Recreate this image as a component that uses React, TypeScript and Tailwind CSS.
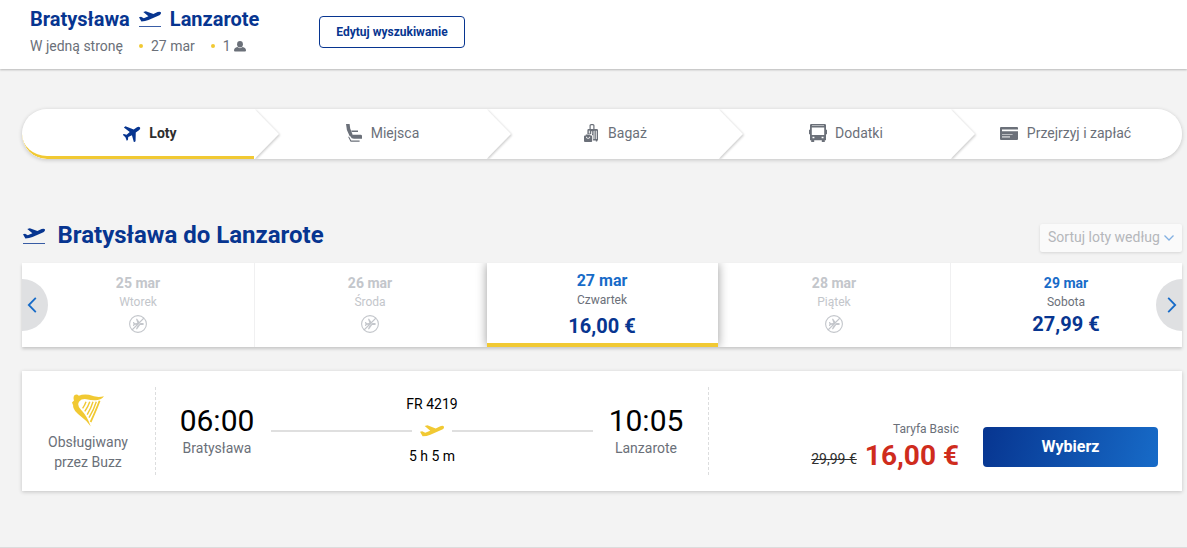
import type { ReactNode } from 'react';

type IconProps = { className?: string };

const TAKEOFF = 'M22 1.6Q22.2 3.2 20.4 4.2L9.5 8.9Q6.2 10.3 2.4 10.4L0 6.3L2 5.7L4.8 7.2L9.4 5.3L4.3 1L6.8 .2L14.4 3.1L18.6 1.1Q21.2 .1 22 1.6Z';
const JET =
  'M9.5 0Q9.2 1.7 7 1.8L3 1.9L-2.2 9.2L-4.2 9.2L-1.8 2L-6 1.5L-7.9 3.7L-9.4 3.7L-8.5 0L-9.4 -3.7L-7.9 -3.7L-6 -1.5L-1.8 -2L-4.2 -9.2L-2.2 -9.2L3 -1.9L7 -1.8Q9.2 -1.7 9.5 0Z';

function TakeoffIcon({ className }: IconProps) {
  return (
    <svg className={className} width="22" height="18" viewBox="0 0 22 18" fill="currentColor">
      <path d={TAKEOFF} />
      <path d="M0 15h22v1H0z" opacity=".8" />
    </svg>
  );
}

function JetIcon() {
  return (
    <svg width="18" height="18" viewBox="0 0 18 18" fill="currentColor" className="text-[#073590]">
      <path d={JET} transform="translate(9.3 8.6) rotate(-34) scale(.98)" />
    </svg>
  );
}

function SeatIcon() {
  return (
    <svg width="17" height="18" viewBox="0 0 17 18" fill="currentColor">
      <path d="M0 0H3.6L4.2 4.5L6.6 10.6L5.8 13L3.6 12L.9 6Z" />
      <path d="M5.2 6.4H12V8H5.7Z" />
      <path d="M6.6 10.8H14.6Q16 10.8 16 12V14.8H8Q5.2 14.8 4.6 12.6Z" />
      <path d="M3 12.5L5.2 16.6H13.6V17.8H4.6L2.2 13Z" />
    </svg>
  );
}

function LuggageIcon() {
  return (
    <svg width="14" height="18" viewBox="0 0 14 18" fill="currentColor">
      <rect x="6.1" y=".6" width="3.8" height="6" rx="1" fill="none" stroke="currentColor" strokeWidth="1.2" />
      <path
        fillRule="evenodd"
        d="M4.6 5H12.8Q14 5 14 6.2V16.4H13.2V17.6H11.8V16.4H9.1V11.2H8V10H3.4V6.2Q3.4 5 4.6 5ZM4.8 6.6V9.6H5.8V6.6ZM7.2 6.6V10H8.2V6.6ZM9.6 6.8V15H10.5V6.8ZM11.8 6.8V15H12.7V6.8Z"
      />
      <path fillRule="evenodd" d="M1.8 11.4V10.4H6.4V11.4H7.2Q8.2 11.4 8.2 12.4V17Q8.2 18 7.2 18H1Q0 18 0 17V12.4Q0 11.4 1 11.4ZM2.1 12.7V13.7Q4.1 15.6 6.1 13.7V12.7H5.3V13.5Q4.1 14.3 2.9 13.5V12.7Z" />
    </svg>
  );
}

function BusIcon() {
  return (
    <svg width="18" height="18" viewBox="0 0 18 18" fill="currentColor">
      <path
        fillRule="evenodd"
        d="M2.3 0H15.7Q17 0 17 1.3V5.7H18V10.2H17V16.2H15.8V18H12.8V16.2H5.2V18H2.2V16.2H1V10.2H0V5.7H1V1.3Q1 0 2.3 0ZM3 1.4V2H15V1.4ZM2.8 3.6V11H15.2V3.6ZM3.5 12.8V14.3H5.4V12.8ZM12.6 12.8V14.3H14.5V12.8Z"
      />
    </svg>
  );
}

function CardIcon() {
  return (
    <svg width="18" height="13" viewBox="0 0 18 13" fill="currentColor">
      <path fillRule="evenodd" d="M1 0H17Q18 0 18 1V12Q18 13 17 13H1Q0 13 0 12V1Q0 0 1 0ZM2 2.5V4.2H18V2.5Z" />
      <path d="M2 7.1H12.6V8H2ZM2 9.1H10V10.8H2Z" fill="#fff" opacity=".55" />
    </svg>
  );
}

function NoFlightIcon() {
  return (
    <svg width="18" height="18" viewBox="0 0 18 18" className="text-[#c3c6cb]">
      <circle cx="9" cy="9" r="8.4" fill="none" stroke="currentColor" strokeWidth="1.1" />
      <path d={JET} fill="currentColor" transform="translate(9.4 9) scale(.58 .56)" />
      <path d="M4 15.2L15.6 3.6" stroke="#fff" strokeWidth=".6" />
      <path d="M3 15L15 3" stroke="currentColor" strokeWidth="1.1" />
    </svg>
  );
}

function HarpLogo() {
  return (
    <svg width="32" height="33" viewBox="0 0 32 33" fill="#f1c933">
      <path d="M2.4 1.2Q5-.3 6.8 1.8Q11 -.2 17 .8Q25 4.2 32 2.2Q29.8 5.6 24 6.2Q19 6.4 14.5 5.2Q9.5 4.6 7.2 7.4Q4.6 11 8.8 15.6Q15 21.8 18.8 32.6Q14.8 26.4 9 22.4Q.2 16 1.2 11.4L0 8.6L2 6.4Q.9 3.2 2.4 1.2Z" />
      <g fill="none" stroke="#f1c933" strokeWidth="1.4">
        <path d="M14 7.8Q13 11 10.6 14.4" />
        <path d="M17.8 7.8Q16.4 12 12.8 17.4" />
        <path d="M21 7.8Q19.2 14 15.2 20.6" />
        <path d="M24.3 7.8Q22 15.5 17 23.6" />
        <path d="M27.6 6.8Q24.2 16 18.6 28" strokeWidth="1.8" />
      </g>
    </svg>
  );
}

function Chevron({ flip }: { flip?: boolean }) {
  return (
    <svg width="10" height="16" viewBox="0 0 10 16" className={flip ? 'rotate-180' : ''} fill="none" stroke="#176bc8" strokeWidth="1.8">
      <path d="M8.8 .9L1.8 8L8.8 15.1" />
    </svg>
  );
}

const STEPS: { label: string; icon: ReactNode; gap: string }[] = [
  { label: 'Loty', icon: <JetIcon />, gap: 'gap-2 pl-6' },
  { label: 'Miejsca', icon: <SeatIcon />, gap: 'gap-2 pl-[25px]' },
  { label: 'Bagaż', icon: <LuggageIcon />, gap: 'gap-2.5 pl-[27px]' },
  { label: 'Dodatki', icon: <BusIcon />, gap: 'gap-2 pl-6' },
  { label: 'Przejrzyj i zapłać', icon: <CardIcon />, gap: 'gap-[9px] pr-px' },
];

const DAYS = [
  { date: '25 mar', day: 'Wtorek' },
  { date: '26 mar', day: 'Środa' },
  { date: '27 mar', day: 'Czwartek', price: '16,00 €', active: true },
  { date: '28 mar', day: 'Piątek' },
  { date: '29 mar', day: 'Sobota', price: '27,99 €' },
];

function Header() {
  return (
    <header className="flex h-[69px] bg-white pl-[30px] shadow-[0_1px_2px_rgba(0,0,0,0.25)]">
      <div className="w-[289px] pt-[7px]">
        <div className="flex items-center text-xl font-bold leading-6 text-[#073590]">
          <span>Bratysława</span>
          <TakeoffIcon className="mx-[9px] mt-0.5" />
          <span>Lanzarote</span>
        </div>
        <div className="mt-1 flex items-center text-sm leading-[22px] text-[#6b7079]">
          <span>W jedną stronę</span>
          <span className="ml-4 mr-2 size-1 rounded-full bg-[#f1c933]" />
          <span>27 mar</span>
          <span className="ml-4 mr-2 size-1 rounded-full bg-[#f1c933]" />
          <span>1</span>
          <svg width="12" height="11" viewBox="0 0 12 11" fill="currentColor" className="ml-[3px] mt-px">
            <ellipse cx="6" cy="3.2" rx="2.9" ry="3.2" />
            <path d="M3.4 6.1Q6 8.3 8.6 6.1Q12 7 12 9.6Q12 10.6 11 10.6H1Q0 10.6 0 9.6Q0 7 3.4 6.1Z" />
          </svg>
        </div>
      </div>
      <button className="mt-4 h-8 w-[146px] rounded-[4px] border border-[#073590] text-xs font-bold text-[#073590]">Edytuj wyszukiwanie</button>
    </header>
  );
}

function Steps() {
  return (
    <nav className="relative flex h-[50px] overflow-hidden rounded-full bg-white text-sm text-[#6b7079]">
      {STEPS.map((step, i) => (
        <div key={step.label} className={`flex w-[232px] items-center justify-center pb-0.5 ${step.gap}`}>
          {step.icon}
          <span className={i === 0 ? 'font-bold text-[#2e2e2e]' : ''}>{step.label}</span>
        </div>
      ))}
      <span className="absolute bottom-0 left-0 h-[50px] w-[232px] rounded-l-full border-b-[3px] border-[#f1c933]" />
      {/* arrow-shaped separators between the steps */}
      <svg className="absolute left-0 top-0" width="1160" height="50" fill="#fff">
        {[232, 464, 696, 928].map((x) => (
          <path key={x} d={`M${x} -.5L${x + 25} 25L${x} 50.5Z`} className="drop-shadow-[1px_1px_1px_rgba(0,0,0,0.2)] [clip-path:inset(0_-4px_0_0)]" />
        ))}
      </svg>
    </nav>
  );
}

function Carousel() {
  return (
    <div className="relative flex h-[84px] bg-white shadow-[0_2px_3px_rgba(0,0,0,0.18)]">
      {DAYS.map((d, i) => (
        <div
          key={d.date}
          className={
            d.active
              ? 'relative z-10 ml-px flex w-[231px] flex-col items-center border-b-4 border-[#f1c933] bg-white pr-px pt-2 shadow-[0_0_10px_rgba(0,0,0,0.4)] [clip-path:inset(0_-14px_0_-14px)]'
              : `flex w-[232px] flex-col items-center pt-[11px] ${i === 1 || i === 4 ? 'border-l border-[#f0f0f1] pr-px' : ''}`
          }
        >
          <span className={`font-bold ${d.active ? 'text-base leading-5' : 'text-sm leading-[18px]'} ${d.price ? 'text-[#176bc8]' : 'text-[#c3c6cb]'}`}>
            {d.date}
          </span>
          <span className={`text-xs ${d.active ? 'leading-[18px]' : 'leading-5'} ${d.price ? 'text-[#6b7079]' : 'text-[#c3c6cb]'}`}>{d.day}</span>
          {d.price ? (
            <span className={`text-xl font-bold leading-6 text-[#073590] ${d.active ? 'mt-[5px]' : ''}`}>{d.price}</span>
          ) : (
            <span className="mt-[3px]">
              <NoFlightIcon />
            </span>
          )}
        </div>
      ))}
      <button className="absolute left-0 top-4 flex h-[52px] w-[26px] items-center rounded-r-full bg-[#dfe0e2] pl-[5px]">
        <Chevron />
      </button>
      <button className="absolute right-0 top-4 flex h-[52px] w-[26px] items-center justify-end rounded-l-full bg-[#dfe0e2] pr-[5px]">
        <Chevron flip />
      </button>
    </div>
  );
}

function Stop({ time, city }: { time: string; city: string }) {
  return (
    <div className="flex w-[76px] flex-col items-center pt-8">
      <span className="text-[30px] leading-9 text-black">{time}</span>
      <span className="-mt-px text-sm leading-5 text-[#6b7079]">{city}</span>
    </div>
  );
}

function Dashes() {
  return <span className="mt-4 h-[88px] w-px bg-[repeating-linear-gradient(#dcddde_0_3px,transparent_3px_5px)]" />;
}

function FlightCard() {
  return (
    <section className="flex h-[120px] bg-white shadow-[0_1px_4px_rgba(0,0,0,0.2)]">
      <div className="flex w-[133px] flex-col items-center pr-px pt-[23px] text-center text-sm leading-5 text-[#6b7079]">
        <HarpLogo />
        <p className="mt-[5px]">
          Obsługiwany
          <br />
          przez Buzz
        </p>
      </div>
      <Dashes />
      <div className="flex w-[552px] pl-[23px]">
        <Stop time="06:00" city="Bratysława" />
        <div className="ml-4 mr-[15px] flex w-[322px] flex-col items-center pt-[23px] text-sm leading-5 text-black">
          <span>FR 4219</span>
          <div className="mb-1.5 mt-2 flex h-[18px] w-full items-center justify-between">
            <span className="h-0.5 w-[141px] bg-[#dfdfdf]" />
            <svg width="24" height="12" viewBox="0 0 22 11" fill="#f1c933">
              <path d={TAKEOFF} />
            </svg>
            <span className="h-0.5 w-[141px] bg-[#dfdfdf]" />
          </div>
          <span>5 h 5 m</span>
        </div>
        <Stop time="10:05" city="Lanzarote" />
      </div>
      <Dashes />
      <div className="flex flex-1 justify-end pr-6">
        <div className="mr-6 flex flex-col items-end pt-[49px]">
          <span className="text-xs leading-[18px] text-[#6b7079]">Taryfa Basic</span>
          <div className="flex items-baseline gap-2">
            <span className="relative -top-px text-sm text-[#2e2e2e] line-through">29,99 €</span>
            <span className="mt-px text-[28px] font-bold leading-[34px] text-[#cf2c1d]">16,00 €</span>
          </div>
        </div>
        <button className="mt-14 h-10 w-[175px] rounded-[4px] bg-[linear-gradient(105deg,#073590,#176bc8)] text-base font-bold text-white">Wybierz</button>
      </div>
    </section>
  );
}

export default function App() {
  return (
    <div className="flex h-[548px] w-[1187px] flex-col overflow-hidden border-b border-[#dcdcdc] bg-[#f3f3f3] font-['Roboto',sans-serif]">
      <Header />
      <main className="ml-[22px] mt-10 w-[1160px]">
        <div className="rounded-full shadow-[0_1px_4px_rgba(0,0,0,0.2)]">
          <Steps />
        </div>
        <div className="mt-[60px] flex h-11 justify-between">
          <h1 className="flex h-8 items-center gap-[12.5px] text-2xl font-bold text-[#073590]">
            <TakeoffIcon className="ml-px mt-1" />
            Bratysława do Lanzarote
          </h1>
          <button className="mt-[5px] flex h-7 w-[142px] items-center justify-between rounded-[2px] bg-[#fafafa] px-2 pb-0.5 text-sm text-[#b5b7bb] shadow-[0_1px_3px_rgba(0,0,0,0.12)]">
            Sortuj loty według
            <svg width="10" height="6" viewBox="0 0 10 6" fill="none" stroke="#82b0e2" strokeWidth="1.3" className="mt-0.5">
              <path d="M.5 .5L5 5L9.5 .5" />
            </svg>
          </button>
        </div>
        <Carousel />
        <div className="mt-6">
          <FlightCard />
        </div>
      </main>
    </div>
  );
}
